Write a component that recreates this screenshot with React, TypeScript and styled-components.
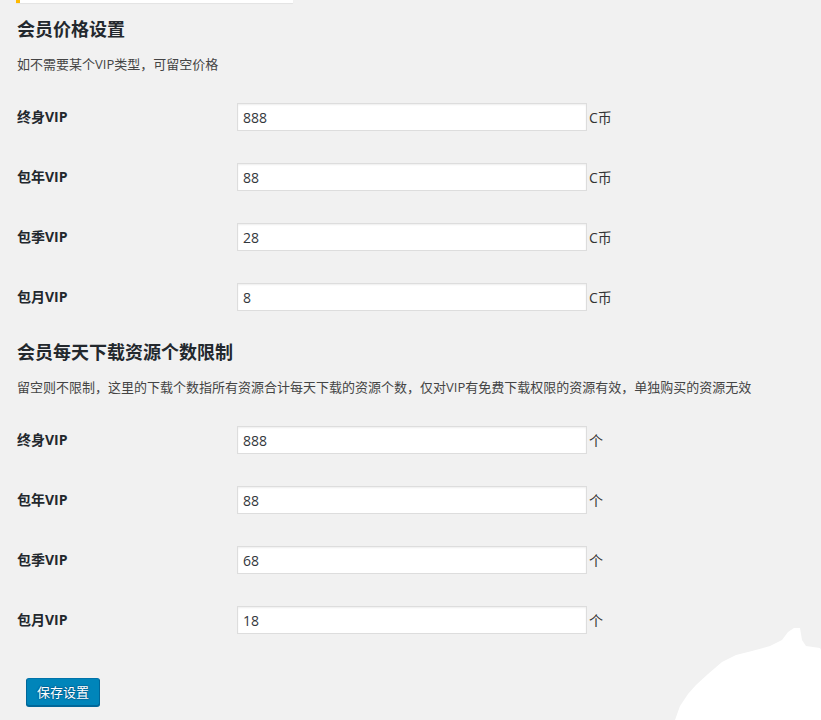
import React from "react";
import styled, { createGlobalStyle } from "styled-components";

const Global = createGlobalStyle`
  html, body {
    margin: 0;
    padding: 0;
    background: #f1f1f1;
  }
  body {
    font-family: "Open Sans", "Noto Sans CJK SC", sans-serif;
    color: #444;
    font-size: 13px;
  }
`;

const Page = styled.div`
  position: relative;
  height: 720px;
  overflow: hidden;
  padding-left: 17px;
  box-sizing: border-box;
`;

const Notice = styled.div`
  width: 273px;
  height: 3px;
  margin-left: -1px;
  background: #fff;
  border-left: 4px solid #ffb900;
  box-shadow: 0 1px 1px rgba(0, 0, 0, 0.06);
`;

const Heading = styled.h2<{ $top: number }>`
  margin: ${(p) => p.$top}px 0 0;
  font-family: "Noto Sans CJK SC", sans-serif;
  font-size: 18px;
  line-height: 24px;
  font-weight: 700;
  color: #23282d;
`;

const Description = styled.p`
  margin: 14px 0 0;
  font-family: "Open Sans", "Noto Sans CJK SC", sans-serif;
  font-size: 13px;
  line-height: 20px;
  color: #444;
  white-space: nowrap;
`;

const Rows = styled.div`
  margin-top: 13px;
  display: flex;
  flex-direction: column;
`;

const Row = styled.div`
  display: flex;
  align-items: center;
  height: 60px;
`;

const Label = styled.label`
  width: 220px;
  flex: none;
  font-family: "Open Sans", "Noto Sans CJK SC", sans-serif;
  font-size: 14px;
  font-weight: 700;
  color: #23282d;
  line-height: 18px;
  margin-top: -1px;
`;

const Input = styled.input`
  box-sizing: border-box;
  width: 350px;
  height: 28px;
  margin: 0;
  padding: 2px 5px;
  border: 1px solid #ddd;
  background: #fff;
  box-shadow: inset 0 1px 2px rgba(0, 0, 0, 0.07);
  font-family: "Open Sans", "Noto Sans CJK SC", sans-serif;
  font-size: 14px;
  color: #32373c;
  outline: none;
`;

const Unit = styled.span`
  margin-left: 2px;
  font-family: "Open Sans", "Noto Sans CJK SC", sans-serif;
  font-size: 14px;
  color: #333;
`;

const Submit = styled.button`
  margin: 28px 0 0 9px;
  height: 28px;
  padding: 0 10px 1px;
  box-sizing: border-box;
  background: #0085ba;
  border: 1px solid;
  border-color: #0073aa #006799 #006799;
  border-radius: 3px;
  box-shadow: 0 1px 0 #006799;
  color: #fff;
  font-family: "Open Sans", "Noto Sans CJK SC", sans-serif;
  font-size: 13px;
  line-height: 26px;
  text-shadow: 0 -1px 1px #006799, 1px 0 1px #006799, 0 1px 1px #006799, -1px 0 1px #006799;
  cursor: pointer;
`;

const Blob = styled.svg`
  position: absolute;
  right: 0;
  bottom: 0;
  width: 161px;
  height: 110px;
`;

type Item = { label: string; value: string };

const prices: Item[] = [
  { label: "终身VIP", value: "888" },
  { label: "包年VIP", value: "88" },
  { label: "包季VIP", value: "28" },
  { label: "包月VIP", value: "8" },
];

const limits: Item[] = [
  { label: "终身VIP", value: "888" },
  { label: "包年VIP", value: "88" },
  { label: "包季VIP", value: "68" },
  { label: "包月VIP", value: "18" },
];

function Section({ items, unit }: { items: Item[]; unit: string }) {
  return (
    <Rows>
      {items.map((it) => (
        <Row key={it.label}>
          <Label>{it.label}</Label>
          <Input defaultValue={it.value} />
          <Unit>{unit}</Unit>
        </Row>
      ))}
    </Rows>
  );
}

export default function App() {
  return (
    <>
      <Global />
      <Page>
        <Notice />
        <Heading $top={13}>会员价格设置</Heading>
        <Description>如不需要某个VIP类型，可留空价格</Description>
        <Section items={prices} unit="C币" />
        <Heading $top={12}>会员每天下载资源个数限制</Heading>
        <Description>
          留空则不限制，这里的下载个数指所有资源合计每天下载的资源个数，仅对VIP有免费下载权限的资源有效，单独购买的资源无效
        </Description>
        <Section items={limits} unit="个" />
        <Submit type="button">保存设置</Submit>
        <Blob viewBox="0 0 161 110">
          <path
            d="M15 110 L20 96 L28 84 L36 75 L48 64 L62 52 L76 45 L92 41 L110 36 L122 30 L128 22 L134 18 L140 18 L142 30 L146 36 L160 38 L161 40 L161 110 Z"
            fill="#ffffff"
          />
        </Blob>
      </Page>
    </>
  );
}
